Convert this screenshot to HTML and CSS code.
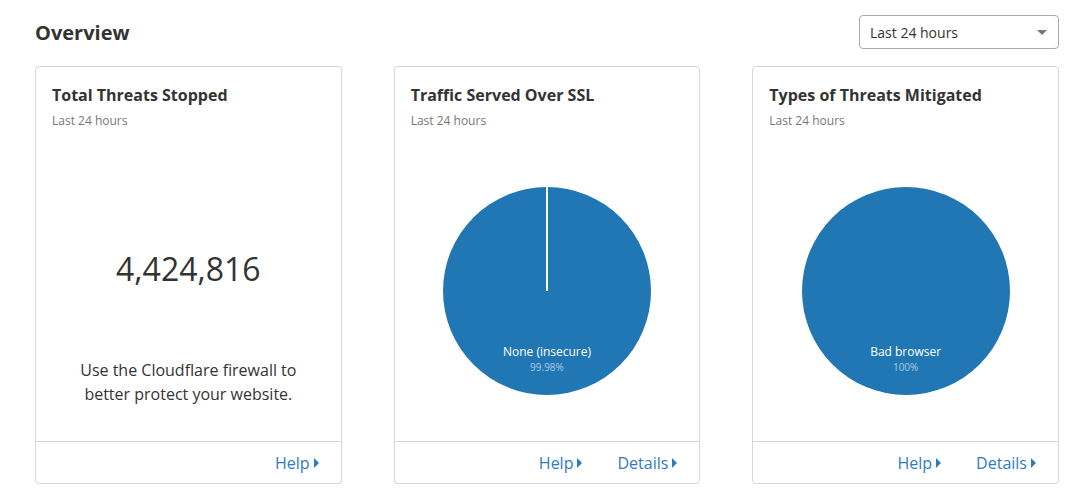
FILE: index.html
```html
<!DOCTYPE html>
<html>
<head>
<meta charset="utf-8">
<link rel="stylesheet" href="styles.css">
</head>
<body>
<div class="page">
  <div class="header">
    <h1 class="title">Overview</h1>
    <div class="select">
      <span>Last 24 hours</span>
      <span class="caret"></span>
    </div>
  </div>
  <div class="cards">
    <div class="card">
      <div class="card-head">
        <h2>Total Threats Stopped</h2>
        <div class="sub">Last 24 hours</div>
      </div>
      <div class="card-body stat">
        <div class="bignum">4,424,816</div>
        <p class="note">Use the Cloudflare firewall to<br>better protect your website.</p>
      </div>
      <div class="card-foot">
        <a class="link">Help<span class="tri"></span></a>
      </div>
    </div>
    <div class="card">
      <div class="card-head">
        <h2>Traffic Served Over SSL</h2>
        <div class="sub">Last 24 hours</div>
      </div>
      <div class="card-body">
        <div class="pie">
          <svg width="210" height="210" viewBox="0 0 210 210">
            <circle cx="105" cy="105" r="104" fill="#2077b4"/>
            <line x1="105" y1="0" x2="105" y2="105" stroke="#fff" stroke-width="2"/>
          </svg>
          <div class="pie-label"><div class="pl-name">None (insecure)</div><div class="pl-val">99.98%</div></div>
        </div>
      </div>
      <div class="card-foot">
        <a class="link">Help<span class="tri"></span></a>
        <a class="link">Details<span class="tri"></span></a>
      </div>
    </div>
    <div class="card">
      <div class="card-head">
        <h2>Types of Threats Mitigated</h2>
        <div class="sub">Last 24 hours</div>
      </div>
      <div class="card-body">
        <div class="pie">
          <svg width="210" height="210" viewBox="0 0 210 210">
            <circle cx="105" cy="105" r="104" fill="#2077b4"/>
          </svg>
          <div class="pie-label"><div class="pl-name">Bad browser</div><div class="pl-val">100%</div></div>
        </div>
      </div>
      <div class="card-foot">
        <a class="link">Help<span class="tri"></span></a>
        <a class="link">Details<span class="tri"></span></a>
      </div>
    </div>
  </div>
</div>
</body>
</html>
```
FILE: styles.css
```css
* { box-sizing: border-box; }
html, body { margin: 0; background: #fff; }
body {
  font-family: "Open Sans", "Noto Sans", sans-serif;
  color: #333;
}
.page {
  padding: 15px 26px 0 35px;
}
.header {
  display: flex;
  justify-content: space-between;
  align-items: flex-start;
  height: 51px;
}
.title {
  margin: 0;
  padding-top: 4px;
  font-size: 20px;
  font-weight: 700;
  line-height: 27px;
  color: #333;
}
.select {
  width: 200px;
  height: 34px;
  border: 1px solid #a9a9a9;
  border-radius: 4px;
  display: flex;
  align-items: center;
  justify-content: space-between;
  padding: 0 11px 0 10px;
  font-size: 14px;
  color: #333;
}
.caret {
  width: 0; height: 0;
  border-left: 5px solid transparent;
  border-right: 5px solid transparent;
  border-top: 5px solid #777;
}
.cards {
  display: grid;
  grid-template-columns: 1fr 1fr 1fr;
  gap: 52px;
}
.card {
  border: 1px solid #d6d6d6;
  border-radius: 4px;
  height: 418px;
  display: flex;
  flex-direction: column;
}
.card-head {
  padding: 17px 16px 0 16px;
}
.card-head h2 {
  margin: 0;
  font-size: 16px;
  font-weight: 700;
  line-height: 22px;
  color: #333;
}
.sub {
  margin-top: 7px;
  font-size: 12px;
  line-height: 16px;
  color: #777;
}
.card-body {
  flex: 1;
  display: flex;
  align-items: center;
  justify-content: center;
}
.card-body.stat {
  flex-direction: column;
  justify-content: flex-start;
  padding-top: 120px;
}
.bignum {
  font-size: 32px;
  line-height: 40px;
  font-weight: 400;
  color: #333;
}
.note {
  margin: 69px 0 0;
  font-size: 16px;
  line-height: 24px;
  text-align: center;
  color: #333;
}
.pie {
  position: relative;
  width: 210px;
  height: 210px;
  margin-top: 12px;
}
.pie svg { display: block; }
.pie-label {
  position: absolute;
  left: 0; right: 0;
  top: 158px;
  text-align: center;
}
.pl-name {
  color: #fff;
  font-size: 12px;
  line-height: 16px;
}
.pl-val {
  color: #a9cbe6;
  font-size: 10px;
  line-height: 14px;
}
.card-foot {
  height: 42px;
  border-top: 1px solid #d6d6d6;
  display: flex;
  justify-content: flex-end;
  align-items: center;
  gap: 35px;
  padding: 0 22px 0 16px;
}
.link {
  color: #2f7bbf;
  font-size: 16px;
  display: flex;
  align-items: center;
}
.tri {
  margin-left: 4px;
  width: 0; height: 0;
  border-top: 5px solid transparent;
  border-bottom: 5px solid transparent;
  border-left: 5px solid #2f7bbf;
}
```
